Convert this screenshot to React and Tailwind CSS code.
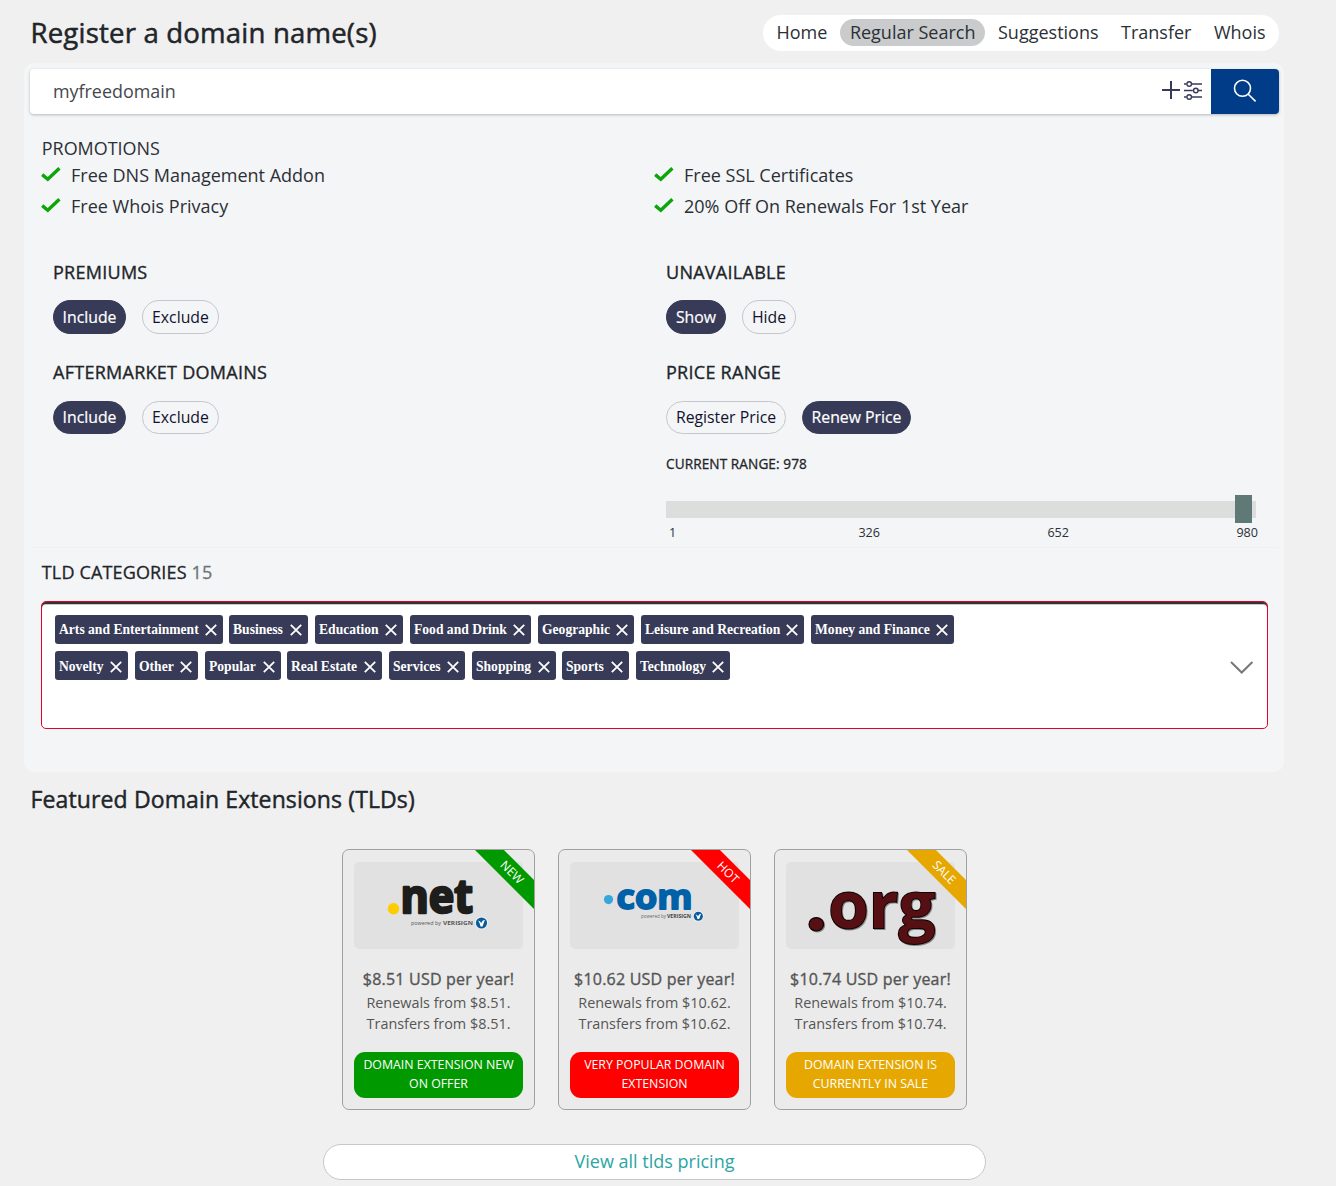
import React from 'react';

const navItems = ['Home', 'Regular Search', 'Suggestions', 'Transfer', 'Whois'];

const categories = [
  [
    ['Arts and Entertainment', 'w-[168px] mr-[6px]'],
    ['Business', 'w-[79px] mr-[7px]'],
    ['Education', 'w-[88px] mr-[7px]'],
    ['Food and Drink', 'w-[121px] mr-[7px]'],
    ['Geographic', 'w-[96px] mr-[7px]'],
    ['Leisure and Recreation', 'w-[163px] mr-[7px]'],
    ['Money and Finance', 'w-[143px]'],
  ],
  [
    ['Novelty', 'w-[73px] mr-[7px]'],
    ['Other', 'w-[63px] mr-[7px]'],
    ['Popular', 'w-[76px] mr-[6px]'],
    ['Real Estate', 'w-[95px] mr-[7px]'],
    ['Services', 'w-[76px] mr-[7px]'],
    ['Shopping', 'w-[84px] mr-[6px]'],
    ['Sports', 'w-[67px] mr-[7px]'],
    ['Technology', 'w-[94px]'],
  ],
];

function Check({ children }) {
  return (
    <li className="flex h-[31px] items-center">
      <svg className="-mt-[2px] mr-[10px] h-[16px] w-[20px]" viewBox="0 0 20 16" fill="none">
        <path d="M1.2 8.6 6.8 13.2 18.4 2.2" stroke="#0aa60a" strokeWidth="3.4" />
      </svg>
      <span>{children}</span>
    </li>
  );
}

function Pill({ active, className, children }) {
  return (
    <button
      className={
        (active
          ? 'border-[#373b58] bg-[#373b58] text-white [-webkit-text-stroke:0.2px_white] '
          : 'border-[#c5c7cc] text-[#12122e] ') +
        'flex items-center justify-center whitespace-nowrap rounded-full border text-[15.8px] leading-none ' +
        className
      }
    >
      {children}
    </button>
  );
}

function GroupTitle({ children }) {
  return (
    <h3 className="flex h-[24px] items-center whitespace-nowrap text-[18px] tracking-[0.27px] text-[#212529] [-webkit-text-stroke:0.35px_#212529]">
      {children}
    </h3>
  );
}

function Verisign({ x, y, r }) {
  return (
    <g transform={`translate(${x} ${y}) scale(${r / 6})`}>
      <circle r="6.4" fill="#f5f5f5" />
      <circle r="5.6" fill="#0a5c9c" />
      <path d="M-3.4 -2.2C-1.8 -2.3 -.9 -.9 -.3 .3 .2 -1.4 1.2 -3 3.5 -3.1 2.6 -1.6 1.9 1.2 1 3.4L-1 3.4C-1.4 1.5 -2 -.6 -3.4 -2.2Z" fill="#fff" />
    </g>
  );
}

function NetLogo() {
  return (
    <svg className="h-[87px] w-[169px]" viewBox="0 0 169 87">
      <circle cx="39.5" cy="46.7" r="5.7" fill="#fc0" />
      <text x="46.5" y="51" textLength="72.5" lengthAdjust="spacingAndGlyphs" fontFamily="Open Sans, sans-serif" fontWeight="700" fontSize="46.5" fill="#1d1d1b" stroke="#1d1d1b" strokeWidth="2.6" strokeLinejoin="round">net</text>
      <text x="57" y="63.2" textLength="30" lengthAdjust="spacingAndGlyphs" fontFamily="Open Sans, sans-serif" fontSize="5.8" fill="#555">powered by</text>
      <text x="89" y="63.2" textLength="30" lengthAdjust="spacingAndGlyphs" fontFamily="Open Sans, sans-serif" fontWeight="700" fontSize="5.6" fill="#555">VERISIGN</text>
      <Verisign x="127.5" y="61" r="6" />
    </svg>
  );
}

function ComLogo() {
  return (
    <svg className="h-[87px] w-[169px]" viewBox="0 0 169 87">
      <circle cx="38.5" cy="37.6" r="4.6" fill="#37a6dd" />
      <text x="46.5" y="46.8" textLength="76" lengthAdjust="spacingAndGlyphs" fontFamily="Open Sans, sans-serif" fontWeight="700" fontSize="34" fill="#0061a8" stroke="#0061a8" strokeWidth="1.8" strokeLinejoin="round">com</text>
      <text x="71" y="56.2" textLength="25" lengthAdjust="spacingAndGlyphs" fontFamily="Open Sans, sans-serif" fontSize="4.8" fill="#666">powered by</text>
      <text x="97" y="56.2" textLength="24" lengthAdjust="spacingAndGlyphs" fontFamily="Open Sans, sans-serif" fontWeight="700" fontSize="4.7" fill="#444">VERISIGN</text>
      <Verisign x="128.3" y="54.3" r="4.9" />
    </svg>
  );
}

function OrgLogo() {
  return (
    <svg className="h-[87px] w-[169px] drop-shadow-[1px_1px_0.5px_rgba(0,0,0,0.4)]" viewBox="0 0 169 87">
      <g fill="#561014" stroke="#0c0203" strokeWidth="1.2">
        <ellipse cx="30.3" cy="62.3" rx="7.3" ry="6.7" />
        <text x="42.3" y="66.3" textLength="107" lengthAdjust="spacingAndGlyphs" fontFamily="Open Sans, sans-serif" fontWeight="700" fontSize="64.5" strokeWidth="1.8" paintOrder="stroke">org</text>
      </g>
    </svg>
  );
}

const extensions = [
  { logo: <NetLogo />, price: '8.51', tag: 'NEW', color: 'bg-[#009a00]', note: ['DOMAIN EXTENSION NEW', 'ON OFFER'] },
  { logo: <ComLogo />, price: '10.62', tag: 'HOT', color: 'bg-[#ff0000]', note: ['VERY POPULAR DOMAIN', 'EXTENSION'] },
  { logo: <OrgLogo />, price: '10.74', tag: 'SALE', color: 'bg-[#e6a800]', note: ['DOMAIN EXTENSION IS', 'CURRENTLY IN SALE'] },
];

function ExtensionCard({ logo, price, tag, color, note }) {
  return (
    <article className="relative flex h-[261px] w-[193px] flex-col items-center overflow-hidden rounded-[7px] border border-[#a0a0a0] bg-[#ebebeb] pt-[12px] text-[#555]">
      <div className="h-[87px] w-[169px] rounded-[5px] bg-[#e1e1e1]">{logo}</div>
      <div className={'absolute right-0 top-0 flex h-[59px] w-[59px] items-center justify-center [clip-path:polygon(0_0,49%_0,100%_51%,100%_100%)] ' + color}>
        <span className="-translate-y-[7.5px] translate-x-[7.5px] rotate-45 text-[12px] leading-none text-white">{tag}</span>
      </div>
      <p className="mt-[18px] whitespace-nowrap text-[16px] leading-[24px] tracking-[0.22px] [-webkit-text-stroke:0.35px_#555]">${price} USD per year!</p>
      <p className="mt-[1px] whitespace-nowrap text-[14.4px] leading-[21px]">Renewals from ${price}.</p>
      <p className="whitespace-nowrap text-[14.4px] leading-[21px]">Transfers from ${price}.</p>
      <div className={'mt-[18px] flex h-[46px] w-[169px] flex-col items-center rounded-[11px] pt-[3px] text-[12.35px] leading-[19px] text-white ' + color}>
        {note.map((line) => (
          <span key={line} className="whitespace-nowrap">{line}</span>
        ))}
      </div>
    </article>
  );
}

export default function App() {
  return (
    <div className="h-[1186px] w-[1336px] overflow-hidden bg-[#f0f0f0] font-['Open_Sans',sans-serif] text-[18px] leading-none text-[#2b3035]">
      <header className="flex h-[63px] items-start justify-between pl-[30.5px] pr-[57px] pt-[15px]">
        <h1 className="-mt-[1px] text-[27.6px] leading-[36px] tracking-[0.17px] text-[#212529] [-webkit-text-stroke:0.5px_#212529]">Register a domain name(s)</h1>
        <nav className="flex h-[36px] w-[516px] items-center gap-[3.5px] rounded-full bg-white pl-[4px] pb-px">
          {navItems.map((item) => (
            <a key={item} className={(item === 'Regular Search' ? 'bg-[#c9cbcc] ' : '') + 'flex h-[27px] items-center whitespace-nowrap rounded-full px-[9.5px] pb-[1px]'}>
              {item}
            </a>
          ))}
        </nav>
      </header>

      <main className="ml-[24px] h-[709px] w-[1260px] rounded-[10px] bg-[#f4f5f7] pt-[6px]">
        <div className="mx-[6px] flex h-[45px] w-[1249px] overflow-hidden rounded-[4px] bg-white shadow-[0_1px_3px_rgba(0,0,0,0.25)]">
          <div className="flex flex-1 items-center pl-[23px] text-[17.9px] text-[#43484d]">myfreedomain</div>
          <svg className="mr-[8px] mt-[11px] h-[22px] w-[42px]" viewBox="0 0 42 22" fill="none" stroke="#373b58">
            <path d="M1 10h18M10 1v18" strokeWidth="2" />
            <g strokeWidth="1.4">
              <path d="M23 4h2.5M30.5 4H41M23 10.5h8.8M36.8 10.5H41M23 17h2.5M30.5 17H41" />
              <circle cx="28.2" cy="4" r="2.3" />
              <circle cx="34.8" cy="10.5" r="2.3" />
              <circle cx="28.2" cy="17" r="2.3" />
            </g>
          </svg>
          <button className="flex w-[68px] items-center justify-center bg-[#003c88]">
            <svg className="-mt-[1px] h-[24px] w-[24px]" viewBox="0 0 24 24" fill="none" stroke="#fff" strokeWidth="1.6">
              <circle cx="9.5" cy="9.3" r="8" />
              <path d="m15 15 7.6 7.4" />
            </svg>
          </button>
        </div>

        <section className="ml-[17px] mt-[25px]">
          <h2 className="flex h-[20px] items-center pl-[0.8px] text-[17.95px]">PROMOTIONS</h2>
          <div className="flex">
            <ul className="w-[613px]">
              <Check>Free DNS Management Addon</Check>
              <Check>Free Whois Privacy</Check>
            </ul>
            <ul>
              <Check>Free SSL Certificates</Check>
              <Check>20% Off On Renewals For 1st Year</Check>
            </ul>
          </div>
        </section>

        <section className="mx-[6px] mt-[39px] flex h-[288px] border-b border-[#f0f0f0] pl-[23px]">
          <div className="w-[613px]">
            <GroupTitle>PREMIUMS</GroupTitle>
            <div className="mb-[26px] mt-[16px] flex gap-[16px]">
              <Pill active className="h-[34px] w-[73px] pt-[1px]">Include</Pill>
              <Pill className="h-[34px] w-[77px] pt-[1px]">Exclude</Pill>
            </div>
            <GroupTitle>AFTERMARKET DOMAINS</GroupTitle>
            <div className="mt-[17px] flex gap-[16px]">
              <Pill active className="h-[33px] w-[73px]">Include</Pill>
              <Pill className="h-[33px] w-[77px]">Exclude</Pill>
            </div>
          </div>
          <div className="w-[592px]">
            <GroupTitle>UNAVAILABLE</GroupTitle>
            <div className="mb-[26px] mt-[16px] flex gap-[16px]">
              <Pill active className="h-[34px] w-[60px] pt-[1px]">Show</Pill>
              <Pill className="h-[34px] w-[54px] pt-[1px]">Hide</Pill>
            </div>
            <GroupTitle>PRICE RANGE</GroupTitle>
            <div className="mt-[17px] flex gap-[16px]">
              <Pill className="h-[33px] w-[120px]">Register Price</Pill>
              <Pill active className="h-[33px] w-[109px]">Renew Price</Pill>
            </div>
            <p className="mt-[20px] flex h-[20px] items-center text-[13.6px] tracking-[0.1px] text-[#212529] [-webkit-text-stroke:0.3px_#212529]">CURRENT RANGE: 978</p>
            <div className="mt-[27px] flex h-[17px] w-[590px] items-center justify-end bg-[#dcdedd] pr-[4px]">
              <div className="mb-[1px] h-[28px] w-[17px] shrink-0 bg-[#5f7977]" />
            </div>
            <div className="mt-[8px] flex w-[592px] justify-between pl-[3px] text-[12.6px] leading-[13px]">
              <span className="w-[22px]">1</span>
              <span>326</span>
              <span>652</span>
              <span>980</span>
            </div>
          </div>
        </section>

        <section className="ml-[17px]">
          <h3 className="mt-[12px] flex h-[24px] items-center pl-[0.8px] text-[18px] tracking-[0.15px] text-[#212529] [-webkit-text-stroke:0.3px]">
            TLD CATEGORIES&nbsp;<span className="text-[#6c757d]">15</span>
          </h3>
          <div className="mt-[17px] flex h-[128px] w-[1227px] rounded-[5px] border border-[#e0022b] bg-white shadow-[inset_0_2px_0_#333,inset_0_3px_0_#c8c8cc]">
            <div className="flex-1 pl-[13px] pt-[13px]">
              {categories.map((row, i) => (
                <div key={i} className="mb-[7px] flex">
                  {row.map(([name, size]) => (
                    <span key={name} className={'flex h-[29px] items-center justify-between whitespace-nowrap rounded-[3px] bg-[#373b58] pl-[4px] pr-[6px] font-["Liberation_Serif",serif] text-[13.6px] font-bold text-white ' + (i === 1 ? 'pt-[2px] ' : '') + size}>
                      {name}
                      <svg className="h-[12px] w-[12px]" viewBox="0 0 12 12" fill="none" stroke="#fff" strokeWidth="1.8">
                        <path d="m.8.8 10.4 10.4M11.2.8.8 11.2" />
                      </svg>
                    </span>
                  ))}
                </div>
              ))}
            </div>
            <svg className="mr-[13px] mt-[58px] h-[15px] w-[25px]" viewBox="0 0 25 15" fill="none" stroke="#777" strokeWidth="2">
              <path d="m2 2 10.7 10.5L23.4 2" />
            </svg>
          </div>
        </section>
      </main>

      <h2 className="ml-[30.6px] mt-[12px] flex h-[30px] items-center text-[23px] tracking-[0.12px] text-[#212529] [-webkit-text-stroke:0.45px_#212529]">Featured Domain Extensions (TLDs)</h2>

      <div className="ml-[342px] mt-[35px] flex gap-[23px]">
        {extensions.map((ext) => (
          <ExtensionCard key={ext.tag} {...ext} />
        ))}
      </div>

      <button className="ml-[323px] mt-[34px] flex h-[36px] w-[663px] items-center justify-center rounded-full border border-[#c5c7cc] bg-white pb-[3px] text-[#2ca5a5]">View all tlds pricing</button>
    </div>
  );
}
